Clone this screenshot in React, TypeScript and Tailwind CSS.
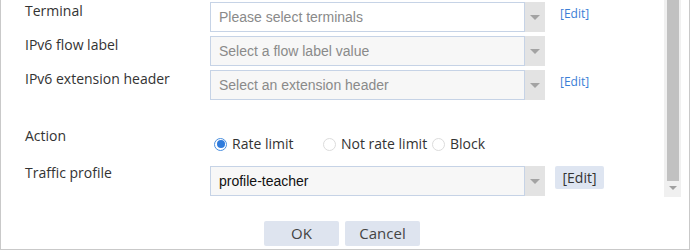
import type { ReactNode } from 'react';

const labelFont = { fontFamily: '"Open Sans", "Noto Sans", sans-serif' };
const inputFont = { fontFamily: '"Liberation Sans", Arial, sans-serif' };

function Caret() {
  return (
    <svg width="10" height="5" viewBox="0 0 10 5" className="block">
      <path d="M0 0 H10 L5 5 Z" fill="#a3a3a3" />
    </svg>
  );
}

interface SelectBoxProps {
  value: string;
  placeholder?: boolean;
  disabled?: boolean;
}

function SelectBox({ value, placeholder, disabled }: SelectBoxProps) {
  return (
    <div className="flex h-[30px] w-[335px]">
      <div
        className={`flex w-[315px] items-center border border-[#c6d3e6] pl-[8px] text-[14px] ${
          disabled ? 'bg-[#f7f7f7]' : 'bg-white'
        } ${placeholder ? 'text-[#8a8a8a]' : 'text-[#111]'}`}
        style={inputFont}
      >
        {value}
      </div>
      <div className="flex w-[20px] items-center justify-center bg-[#e3e3e3]">
        <Caret />
      </div>
    </div>
  );
}

function Row({
  label,
  children,
  extra,
  labelClass = '',
}: {
  label: string;
  children: ReactNode;
  extra?: ReactNode;
  labelClass?: string;
}) {
  return (
    <div className="flex items-start">
      <div
        className={`w-[209px] pl-[24px] text-[14px] leading-[18px] text-[#333] ${labelClass}`}
        style={labelFont}
      >
        {label}
      </div>
      {children}
      {extra}
    </div>
  );
}

function EditLink() {
  return (
    <span className="ml-[15px] mt-[4px] text-[12px] leading-[16px] text-[#3a7ed6]" style={labelFont}>
      [Edit]
    </span>
  );
}

function Radio({ checked, label, width }: { checked?: boolean; label: string; width: string }) {
  return (
    <div className={`flex items-center ${width}`}>
      {checked ? (
        <span className="flex h-[13px] w-[13px] items-center justify-center rounded-full border border-[#4a8fe0] bg-white">
          <span className="h-[8px] w-[8px] rounded-full bg-[#2f7bdc]" />
        </span>
      ) : (
        <span className="h-[13px] w-[13px] rounded-full border border-[#dcdcdc] bg-white" />
      )}
      <span className="ml-[5px] text-[14px] leading-[18px] text-[#333]" style={labelFont}>
        {label}
      </span>
    </div>
  );
}

export default function App() {
  return (
    <div className="h-[251px] w-[690px] bg-white">
      <div className="relative flex h-[250px] w-[690px] border-x border-b border-[#c9c9c9] bg-white">
        <div className="flex flex-1 flex-col pt-[2px]">
          <Row label="Terminal" extra={<EditLink />}>
            <SelectBox value="Please select terminals" placeholder />
          </Row>
          <div className="mt-[4px]">
            <Row label="IPv6 flow label">
              <SelectBox value="Select a flow label value" placeholder disabled />
            </Row>
          </div>
          <div className="mt-[4px]">
            <Row label="IPv6 extension header" extra={<EditLink />}>
              <SelectBox value="Select an extension header" placeholder disabled />
            </Row>
          </div>

          <div className="mt-[27px] flex items-start">
            <div className="w-[209px] pl-[24px] text-[14px] leading-[18px] text-[#333]" style={labelFont}>
              Action
            </div>
            <div className="mt-[8px] flex pl-[4px]">
              <Radio checked label="Rate limit" width="w-[109px]" />
              <Radio label="Not rate limit" width="w-[109px]" />
              <Radio label="Block" width="w-auto" />
            </div>
          </div>

          <div className="mt-[13px]">
            <Row
              label="Traffic profile"
              labelClass="-mt-[2px]"
              extra={
                <span
                  className="ml-[10px] flex h-[23px] w-[49px] items-center justify-center rounded-[2px] bg-[#dee5f1] text-[14px] text-[#333]"
                  style={labelFont}
                >
                  [Edit]
                </span>
              }
            >
              <SelectBox value="profile-teacher" disabled />
            </Row>
          </div>

          <div className="mt-[25px] flex gap-[6px] pl-[263px]">
            <button
              className="h-[25px] w-[75px] rounded-[2px] bg-[#dee4ef] text-[15px] text-[#444]"
              style={labelFont}
            >
              OK
            </button>
            <button
              className="h-[25px] w-[75px] rounded-[2px] bg-[#dee4ef] text-[15px] text-[#444]"
              style={labelFont}
            >
              Cancel
            </button>
          </div>
        </div>

        <div className="mr-[8px] flex h-[197px] w-[17px] flex-col items-center bg-[#f0f0f0]">
          <div className="h-[181px] w-[12px] bg-[#c1c1c1]" />
          <div className="mt-[5px]">
            <svg width="8" height="4" viewBox="0 0 8 4" className="block">
              <path d="M0 0 H8 L4 4 Z" fill="#a0a0a0" />
            </svg>
          </div>
        </div>
      </div>
    </div>
  );
}
